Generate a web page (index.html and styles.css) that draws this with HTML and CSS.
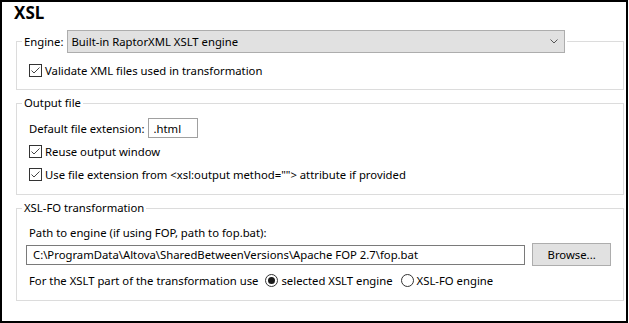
FILE: index.html
```html
<!DOCTYPE html>
<html lang="en">
<head>
  <meta charset="UTF-8" />
  <title>XSL Options</title>
  <link rel="stylesheet" href="styles.css">
</head>
<body>
  <div class="panel">
    <h1 class="title">XSL</h1>

    <!-- Engine -->
    <fieldset class="group group-engine">
      <legend class="engine-legend">
        <span>Engine:</span>
        <div class="combo">
          <span>Built-in RaptorXML XSLT engine</span>
          <svg class="chevron" width="8" height="5" viewBox="0 0 8 5"><polyline points="0.5,0.5 4,4 7.5,0.5" fill="none" stroke="#555" stroke-width="1"/></svg>
        </div>
      </legend>
      <label class="check">
        <svg class="box" width="13" height="13" viewBox="0 0 13 13"><rect x="0.5" y="0.5" width="12" height="12" fill="#fff" stroke="#333"/><polyline points="2.5,6.5 5,9 10.5,3.5" fill="none" stroke="#444" stroke-width="1"/></svg>
        Validate XML files used in transformation
      </label>
    </fieldset>

    <!-- Output file -->
    <fieldset class="group group-output">
      <legend>Output file</legend>
      <div class="row">
        <span>Default file extension:</span>
        <input class="field ext" type="text" value=".html" readonly />
      </div>
      <label class="check reuse">
        <svg class="box" width="13" height="13" viewBox="0 0 13 13"><rect x="0.5" y="0.5" width="12" height="12" fill="#fff" stroke="#333"/><polyline points="2.5,6.5 5,9 10.5,3.5" fill="none" stroke="#444" stroke-width="1"/></svg>
        Reuse output window
      </label>
      <label class="check use-ext">
        <svg class="box" width="13" height="13" viewBox="0 0 13 13"><rect x="0.5" y="0.5" width="12" height="12" fill="#fff" stroke="#333"/><polyline points="2.5,6.5 5,9 10.5,3.5" fill="none" stroke="#444" stroke-width="1"/></svg>
        Use file extension from &lt;xsl:output method=""&gt; attribute if provided
      </label>
    </fieldset>

    <!-- XSL-FO -->
    <fieldset class="group group-fo">
      <legend>XSL-FO transformation</legend>
      <div class="row">Path to engine (if using FOP, path to fop.bat):</div>
      <div class="row path-row">
        <input class="field path" type="text" value="C:\ProgramData\Altova\SharedBetweenVersions\Apache FOP 2.7\fop.bat" readonly />
        <button class="browse">Browse...</button>
      </div>
      <div class="row radio-row">
        <span>For the XSLT part of the transformation use</span>
        <label class="radio first">
          <svg width="13" height="13" viewBox="0 0 13 13"><circle cx="6.5" cy="6.5" r="6" fill="#fff" stroke="#333"/><circle cx="6.5" cy="6.5" r="3.5" fill="#1a1a1a"/></svg>
          selected XSLT engine
        </label>
        <label class="radio second">
          <svg width="13" height="13" viewBox="0 0 13 13"><circle cx="6.5" cy="6.5" r="6" fill="#fff" stroke="#333"/></svg>
          XSL-FO engine
        </label>
      </div>
    </fieldset>
  </div>
</body>
</html>
```

FILE: styles.css
```css
* {
  box-sizing: border-box;
}
body {
  margin: 0;
  font-family: "Noto Sans", sans-serif;
  font-size: 11.3px;
  color: #000;
  background-color: #fff;
}
.panel {
  width: 628px;
  height: 323px;
  border: 2px solid #000;
  padding: 0 2px 0 14px;
}
.title {
  margin: 0 0 0 -2px;
  padding-top: 1px;
  font-size: 17px;
  line-height: 20px;
  font-weight: bold;
}
.group {
  margin: 5px 0 0 0;
  border: 1px solid #dcdcdc;
  padding: 0 12px;
  min-width: 0;
}
.group legend {
  margin-left: -7px;
  padding: 0 2px;
  line-height: 16px;
}
.group-engine {
  margin-top: 7px;
  padding-top: 9px;
  padding-bottom: 11px;
}
.engine-legend {
  display: flex;
  align-items: center;
  gap: 3px;
}
.combo {
  width: 498px;
  height: 23px;
  display: flex;
  align-items: center;
  justify-content: space-between;
  padding: 0 6px 0 4px;
  background-color: #e1e1e1;
  border: 1px solid #adadad;
}
.check {
  display: flex;
  align-items: center;
  height: 16px;
}
.check .box {
  margin-right: 3px;
}
.row {
  display: flex;
  align-items: center;
  height: 16px;
}
.group-output {
  padding-top: 7px;
  padding-bottom: 12px;
}
.group-output .row {
  height: 20px;
}
.reuse {
  margin-top: 5px;
}
.use-ext {
  margin-top: 7px;
}
.field {
  font: inherit;
  color: #000;
  height: 20px;
  border: 1px solid #a0a0a0;
  background-color: #fff;
  outline: none;
}
.ext {
  width: 50px;
  margin-left: 3px;
  padding: 0 0 0 5px;
}
.group-fo {
  padding-top: 8px;
  padding-bottom: 12px;
}
.path-row {
  height: 23px;
  margin-top: 3px;
}
.path {
  width: 501px;
  margin-left: -3px;
  padding: 0 0 0 6px;
  border-color: #7a7a7a;
}
.browse {
  font: inherit;
  color: #000;
  width: 79px;
  height: 23px;
  margin-left: 7px;
  padding: 0;
  background-color: #e1e1e1;
  border: 1px solid #adadad;
}
.radio-row {
  margin-top: 6px;
}
.radio {
  display: flex;
  align-items: center;
  gap: 3px;
}
.radio.first {
  margin-left: 7px;
}
.radio.second {
  margin-left: 8px;
}
```
